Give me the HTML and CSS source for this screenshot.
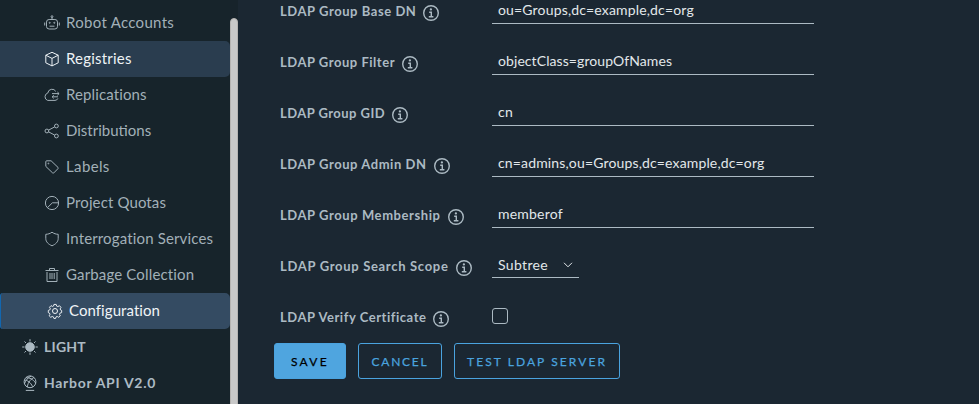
FILE: index.html
```html
<!DOCTYPE html>
<html lang="en"><head><meta charset="utf-8"><title>Configuration</title><link rel="stylesheet" href="styles.css"></head>
<body>
<svg class="defs" aria-hidden="true"><symbol id="info" viewBox="0 0 16 16"><circle cx="8" cy="8" r="7.3" fill="none" stroke="currentColor" stroke-width="1.4"/><circle cx="7.9" cy="4.4" r="1.15" fill="currentColor" stroke="none"/><path d="M6.2 7.3h2.100v4.200M5.800 11.700h4.600" fill="none" stroke="currentColor" stroke-width="1.400"/></symbol></svg>
<div class="app">
<nav class="side">
<a class="item robot"><svg viewBox="0 0 16 16"><rect x="2.5" y="4.5" width="11" height="9.5" rx="2.6"/><path d="M.7 7.5v3M15.3 7.5v3M5.5 11.2h5M8 4.5V2.2"/><circle cx="8" cy="1.6" r=".9"/><circle cx="5.7" cy="7.8" r=".55"/><circle cx="10.3" cy="7.8" r=".55"/></svg><span>Robot Accounts</span></a>
<a class="item registries hover"><svg viewBox="0 0 16 16"><path d="M8 1.3l6.2 2.9v7.6L8 14.9l-6.2-3.1V4.2zM1.8 4.2L8 7.4l6.2-3.2M8 7.4v7.5"/></svg><span>Registries</span></a>
<a class="item replications"><svg viewBox="0 0 16 16"><path d="M11.8 4.4A4.3 4.3 0 0 0 3.8 6 3.9 3.9 0 0 0 3.6 13.4H11a3.2 3.2 0 0 0 2.9-2M8 6.6h7M13.4 5l1.7 1.6-1.7 1.6M14 9.8H8.2M9.8 8.2L8.1 9.8l1.7 1.6"/></svg><span>Replications</span></a>
<a class="item distributions"><svg viewBox="0 0 16 16"><circle cx="2.9" cy="8" r="1.9"/><circle cx="12.4" cy="3" r="1.9"/><circle cx="12.4" cy="13" r="1.9"/><path d="M4.6 7.1l6.1-3.2M4.6 8.9l6.1 3.2"/></svg><span>Distributions</span></a>
<a class="item labels"><svg viewBox="0 0 16 16"><path d="M1.8 2.7a.9.9 0 0 1 .9-.9h4.4l6.9 6.6a.9.9 0 0 1 0 1.2L9.8 13.9a.9.9 0 0 1-1.2 0L1.8 7.4z"/><circle cx="4.4" cy="4.5" r=".45"/></svg><span>Labels</span></a>
<a class="item quotas"><svg viewBox="0 0 16 16"><circle cx="8" cy="8" r="6.6"/><path d="M3.4 12.7L8.4 7.8h6.2"/></svg><span>Project Quotas</span></a>
<a class="item interrogation"><svg viewBox="0 0 16 16"><path d="M8 1.2c2 1.5 4 2 6.2 2.1v4.2c0 3.4-2.5 5.700-6.200 7.300-3.700-1.600-6.200-3.900-6.200-7.300V3.300C4 3.200 6 2.700 8 1.200z"/></svg><span>Interrogation Services</span></a>
<a class="item garbage"><svg viewBox="0 0 16 16"><path d="M1.500 3.500h13M5.500 3.500v-2h5v2M3 5v9.500h10V5M6 6v6M8 6v6M10.200 6v6"/></svg><span>Garbage Collection</span></a>
<a class="item configuration active"><svg viewBox="0 0 16 16"><circle cx="8" cy="8" r="2.500"/><path d="M6.800 1.200h2.400l.5 1.800 1.300.5 1.700-.9 1.600 1.700-.9 1.700.5 1.200 1.100.4v2.300l-1.700.5-.6 1.300.9 1.600-1.700 1.600-1.600-.9-1.300.5-.5 1.700H6.800l-.5-1.700-1.300-.5-1.600.9-1.700-1.600.9-1.600L2 10.400l-1.200-.5V7.600L2.400 7 3 5.800l-.9-1.600 1.600-1.700 1.700.9 1-.5z" transform="translate(.55 .3) scale(.94)"/></svg><span>Configuration</span></a>
<a class="item light top"><svg viewBox="0 0 16 16"><circle cx="8" cy="8" r="4.300" fill="currentColor"/><path d="M8 .2v2.300M8 13.500v2.300M.2 8h2.300M13.500 8h2.300M2.500 2.500l1.400 1.400M12.100 12.100l1.400 1.400M2.500 13.500l1.400-1.400M12.100 3.900l1.400-1.400"/></svg><span>LIGHT</span></a>
<a class="item api top"><svg viewBox="0 0 16 16"><circle cx="8" cy="6.800" r="5.900"/><path d="M3.800 15.400h8.400M2.300 5c3 .2 6.400 2.300 8.300 6.700M4 2.700c3.200-.2 7.300 1.600 9.700 5.400M12.100 2.500C9.500 3.400 6 6.800 5.300 12M9 1.200c-3 1.200-5.300 4-6.500 7.500"/></svg><span>Harbor API V2.0</span></a>
</nav>
<div class="track"><div class="thumb"></div></div>
<main>
<form>
<div class="row"><label class="base">LDAP Group Base DN</label><svg class="info"><use href="#info"/></svg><div class="control"><div class="input v-base">ou=Groups,dc=example,dc=org</div></div></div>
<div class="row"><label class="filter">LDAP Group Filter</label><svg class="info"><use href="#info"/></svg><div class="control"><div class="input v-filter">objectClass=groupOfNames</div></div></div>
<div class="row"><label class="gid">LDAP Group GID</label><svg class="info"><use href="#info"/></svg><div class="control"><div class="input v-gid">cn</div></div></div>
<div class="row"><label class="admin">LDAP Group Admin DN</label><svg class="info"><use href="#info"/></svg><div class="control"><div class="input v-admin">cn=admins,ou=Groups,dc=example,dc=org</div></div></div>
<div class="row"><label class="member">LDAP Group Membership</label><svg class="info"><use href="#info"/></svg><div class="control"><div class="input v-member">memberof</div></div></div>
<div class="row"><label class="scope">LDAP Group Search Scope</label><svg class="info"><use href="#info"/></svg><div class="control"><div class="input select">Subtree<svg viewBox="0 0 10 6"><path d="M1 .8l4 4 4-4"/></svg></div></div></div>
<div class="row"><label class="verify">LDAP Verify Certificate</label><svg class="info"><use href="#info"/></svg><div class="control"><div class="check"></div></div></div>
</form>
<div class="buttons"><button class="save">SAVE</button><button class="cancel">CANCEL</button><button class="test">TEST LDAP SERVER</button></div>
</main>
</div>
</body></html>
```
FILE: styles.css
```css
*{box-sizing:border-box}
body{margin:0;height:404px;overflow:hidden;background:#1b2732;color:#acbac3;font-family:Lato,"Open Sans",sans-serif}
.defs{display:block;width:0;height:0}
.app{display:flex;height:404px}
svg{fill:none;stroke:currentColor;stroke-width:1}
.side{width:230px;height:404px;padding-top:5px;background:#17242b;overflow:hidden}
.item{display:flex;align-items:center;height:36px;padding-left:44px;font-size:15px;line-height:20px;color:#a2b0b8;white-space:nowrap}
.item svg{width:16px;height:16px;margin-right:6px;flex:none}
.item span{padding-bottom:2px}
.top span{padding-bottom:0}
.hover{background:#2a3d4f;color:#eef3f6;border-radius:0 5px 5px 0}
.active{background:#344b62;color:#f0f4f7;border-radius:3px 5px 5px 3px;border-left:1px solid #1267b0;padding-left:46px}
.top{padding-left:22px;font-size:14px;font-weight:700;color:#acbac3}
.robot{letter-spacing:.3px}.registries{letter-spacing:.2px}.replications{letter-spacing:.12px}.distributions{letter-spacing:0}.labels{letter-spacing:.36px}.quotas{letter-spacing:.12px}.interrogation,.garbage{letter-spacing:.15px}.configuration{letter-spacing:.06px}.light{letter-spacing:.24px}.api{letter-spacing:.7px}
.track{width:8px;height:404px;padding-top:18px;background:#17232b}
.thumb{height:400px;border-radius:4px;background:#c8c8c8;border:1px solid #b5b3b1}
main{flex:1;padding-left:36px}
form{height:343px;padding-left:6px;margin-top:-13px}
.row{display:grid;grid-template-columns:auto 16px 1fr;height:51px;width:534px;align-items:start}
label{font-size:13px;font-weight:700;line-height:18px;padding-top:15px;white-space:nowrap}
.info{width:16px;height:16px;margin:18px 0 0 7px}
.control{justify-self:end;width:322px;padding-top:12px}
.input{height:25px;padding:1px 6px 0;border-bottom:1px solid #acbac3;font-size:14px;line-height:20px;color:#e2e7ea;white-space:nowrap}
.select{display:flex;justify-content:space-between;width:87px;height:24px;letter-spacing:.34px}
.select svg{width:10px;height:6px;margin-top:7px}
.check{width:16px;height:16px;margin-top:3px;border:1px solid #acbac3;border-radius:3px}
.base{letter-spacing:.56px}.filter{letter-spacing:.53px}.gid{letter-spacing:.45px}.admin{letter-spacing:.56px}.member{letter-spacing:.58px}.scope{letter-spacing:.69px}.verify{letter-spacing:.54px}
.v-base{letter-spacing:.16px}.v-filter{letter-spacing:.08px}.v-gid{letter-spacing:.4px}.v-admin{letter-spacing:.15px}.v-member{letter-spacing:.2px}
.buttons{display:flex;gap:12px;margin-top:13px}
button{height:36px;padding:2px 0 0;border:1px solid #4aa3df;border-radius:3px;background:none;color:#4aa3df;font:12px/18px Lato,sans-serif;-webkit-text-stroke:.25px currentColor;white-space:nowrap}
.save{width:72px;background:#4fa5df;color:#000;letter-spacing:2.28px}
.cancel{width:84px;letter-spacing:1.76px}
.test{width:166px;letter-spacing:2.08px}
```
